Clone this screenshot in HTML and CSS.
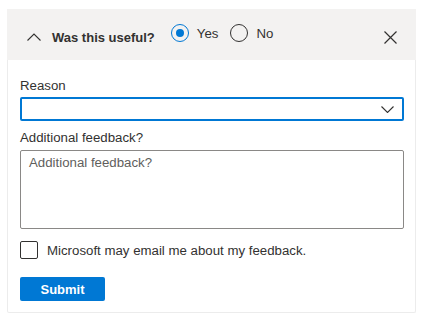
FILE: index.html
```html
<!DOCTYPE html>
<html lang="en">
<head>
  <meta charset="UTF-8" />
  <title>Feedback</title>
  <link rel="stylesheet" href="styles.css">
</head>
<body>
  <div class="card">
    <div class="card-head">
      <svg class="chev-up" width="14" height="8" viewBox="0 0 14 8"><polyline points="0.5,7.5 7,1 13.5,7.5" fill="none" stroke="#323130" stroke-width="1.1"/></svg>
      <span class="title">Was this useful?</span>
      <div class="choices">
        <label class="radio"><span class="dot checked"></span>Yes</label>
        <label class="radio"><span class="dot"></span>No</label>
      </div>
      <svg class="close" width="13" height="13" viewBox="0 0 13 13"><path d="M0.5 0.5 L12.5 12.5 M12.5 0.5 L0.5 12.5" stroke="#323130" stroke-width="1.2"/></svg>
    </div>
    <div class="card-body">
      <div class="label">Reason</div>
      <div class="select">
        <svg width="13" height="7" viewBox="0 0 13 7"><polyline points="0.5,0.5 6.5,6.5 12.5,0.5" fill="none" stroke="#323130" stroke-width="1.1"/></svg>
      </div>
      <div class="label">Additional feedback?</div>
      <div class="textarea">Additional feedback?</div>
      <label class="check"><span class="box"></span>Microsoft may email me about my feedback.</label>
      <button class="submit">Submit</button>
    </div>
  </div>
</body>
</html>
```

FILE: styles.css
```css
body {
  margin: 0;
  font-family: 'Segoe UI', 'Liberation Sans', sans-serif;
  font-size: 13.25px;
  color: #323130;
  background: #fff;
}
.card {
  margin: 9px 0 0 7px;
  width: 409px;
  height: 304px;
  border: 1px solid #ececec;
  border-top: none;
  border-radius: 2px;
  box-sizing: border-box;
}
.card-head {
  height: 51px;
  background: #f3f2f1;
  display: flex;
  align-items: center;
  padding: 0 19px 0 20px;
  margin: 0 -1px;
}
.chev-up {
  margin-top: 4px;
}
.title {
  font-weight: bold;
  font-size: 13px;
  margin-left: 11px;
  margin-top: 5px;
}
.choices {
  display: flex;
  align-items: center;
  margin-left: 16px;
  margin-bottom: 3px;
}
.radio {
  display: flex;
  align-items: center;
  margin-right: 12px;
}
.dot {
  width: 16px;
  height: 16px;
  border: 1px solid #323130;
  border-radius: 50%;
  margin-right: 8px;
  position: relative;
}
.dot.checked {
  border-color: #0078d4;
}
.dot.checked::after {
  content: '';
  position: absolute;
  left: 4px;
  top: 4px;
  width: 8px;
  height: 8px;
  border-radius: 50%;
  background: #0078d4;
}
.close {
  margin-left: auto;
  margin-top: 6px;
}
.card-body {
  padding: 0 12px;
}
.label {
  height: 18px;
  line-height: 18px;
  padding-top: 17px;
  margin-bottom: 2px;
}
.select {
  height: 24px;
  border: 2px solid #0078d4;
  border-radius: 2px;
  box-sizing: border-box;
  display: flex;
  align-items: center;
  justify-content: flex-end;
  padding-right: 8px;
  margin-right: -1px;
}
.select + .label {
  padding-top: 8px;
  margin-bottom: 3px;
}
.textarea {
  height: 79px;
  border: 1px solid #8a8886;
  border-radius: 2px;
  box-sizing: border-box;
  padding: 4px 8px;
  color: #605e5c;
  margin-right: -1px;
}
.check {
  display: flex;
  align-items: center;
  height: 18px;
  margin-top: 12px;
}
.box {
  width: 16px;
  height: 16px;
  border: 1px solid #323130;
  border-radius: 2px;
  margin-right: 9px;
}
.submit {
  display: block;
  margin-top: 18px;
  width: 85px;
  height: 24px;
  border: none;
  border-radius: 2px;
  background: #0078d4;
  color: #fff;
  font-family: inherit;
  font-size: 13px;
  font-weight: bold;
}
```
